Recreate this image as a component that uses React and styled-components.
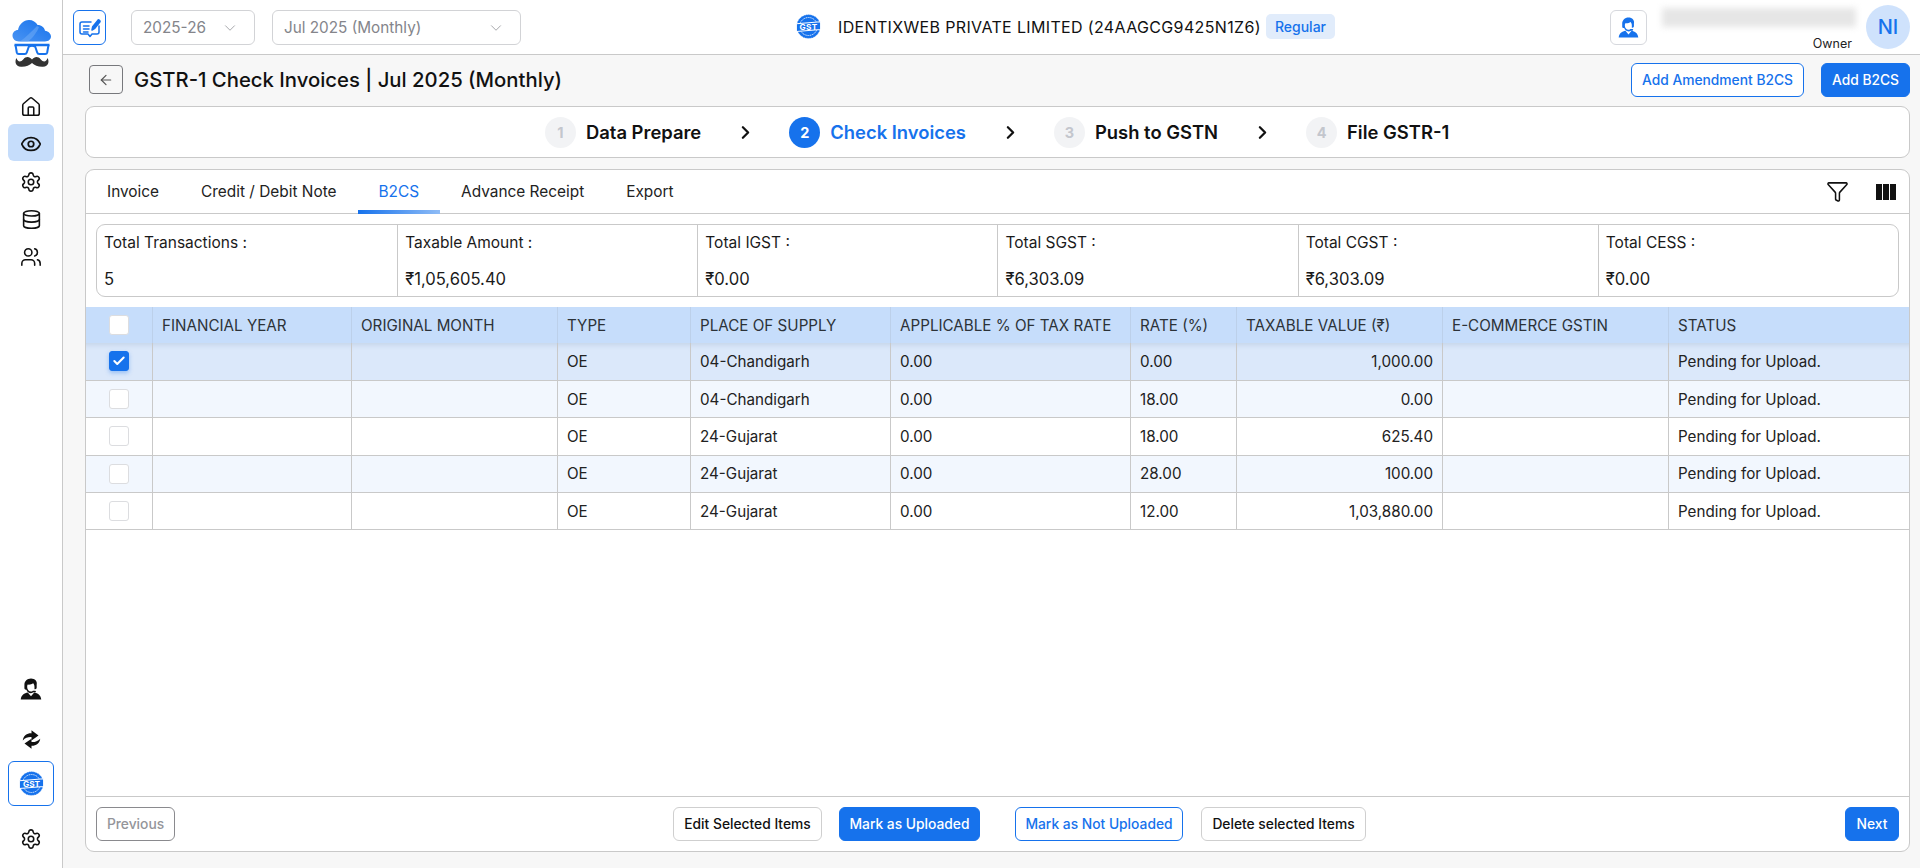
import React from "react";
import styled, { createGlobalStyle } from "styled-components";
import { ArrowLeft, ChevronDown, ChevronRight, Check, Database, Eye, Filter, Home, Settings, Users } from "lucide-react";

const primary = "#1672ec";
const line = "#c9c9c9";

const Global = createGlobalStyle`
  html, body { margin: 0; padding: 0; height: 100%; background: #f7f7f7; }
  body { font-family: Inter, "Noto Sans", sans-serif; color: #111; overflow: hidden; }
  * { box-sizing: border-box; }
`;

const Shell = styled.div`
  display: flex;
  width: 1920px;
  height: 868px;
`;
const Sidebar = styled.aside`
  width: 63px;
  flex: none;
  background: #fff;
  border-right: 1px solid ${line};
  display: flex;
  flex-direction: column;
  align-items: center;
  padding-top: 20px;
`;
const LogoBox = styled.div`
  width: 40px;
  height: 47px;
  margin-bottom: 19px;
  margin-left: 1px;
`;
const NavList = styled.nav`
  display: flex;
  flex-direction: column;
  align-self: stretch;
  padding: 0 8px;
`;
const NavItem = styled.div`
  height: 37.6px;
  padding-top: 4px;
  border-radius: 6px;
  display: flex;
  align-items: center;
  justify-content: center;
  background: ${(p) => (p.$active ? "#c6ddfb" : "transparent")};
  color: #111;
`;
const BottomNav = styled.div`
  margin-top: auto;
  align-self: stretch;
  display: flex;
  flex-direction: column;
  align-items: center;
  padding: 0 8px;
`;
const BottomItem = styled.div`
  height: ${(p) => p.$h}px;
  padding-top: ${(p) => p.$pt || 0}px;
  align-self: stretch;
  display: flex;
  align-items: center;
  justify-content: center;
  border: ${(p) => (p.$boxed ? `1px solid ${primary}` : "none")};
  border-radius: 6px;
  color: #111;
`;
const Main = styled.div`
  flex: 1;
  min-width: 0;
  display: flex;
  flex-direction: column;
`;
const Topbar = styled.header`
  height: 55px;
  flex: none;
  background: #fff;
  border-bottom: 1px solid ${line};
  display: flex;
  align-items: flex-start;
  justify-content: space-between;
  padding: 10px 10px 0;
`;
const TopLeft = styled.div`
  display: flex;
  align-items: center;
`;
const IconBtn = styled.div`
  width: ${(p) => p.$w}px;
  height: 35px;
  border: 1px solid ${(p) => p.$border};
  border-radius: 6px;
  display: flex;
  align-items: center;
  justify-content: center;
  color: ${primary};
  background: #fff;
`;
const Select = styled.div`
  width: ${(p) => p.$w}px;
  height: 35px;
  margin-left: ${(p) => p.$ml}px;
  border: 1px solid #d2d3d6;
  border-radius: 6px;
  display: flex;
  align-items: center;
  justify-content: space-between;
  padding: 0 15px 0 11px;
  color: #84858b;
  font-size: 15.3px;
`;
const Company = styled.div`
  display: flex;
  align-items: center;
  height: 35px;
  margin-top: -1px;
  font-size: 16px;
  letter-spacing: 0.35px;
  color: #111;
`;
const CompanyName = styled.span`
  margin: 0 5px 0 17px;
  white-space: nowrap;
`;
const Pill = styled.span`
  background: #e1ecfb;
  color: ${primary};
  font-size: 14px;
  font-weight: 500;
  letter-spacing: 0;
  border-radius: 5px;
  padding: 4px 9px;
  line-height: 17px;
`;
const TopRight = styled.div`
  display: flex;
  align-items: flex-start;
`;
const UserBlock = styled.div`
  width: 194px;
  margin: -2px 10px 0 15px;
  display: flex;
  flex-direction: column;
  align-items: flex-end;
`;
const BlurName = styled.div`
  width: 194px;
  height: 19px;
  background: #e6e6e6;
  filter: blur(3px);
`;
const Owner = styled.div`
  font-size: 12.5px;
  margin: 8px 4px 0 0;
  line-height: 18px;
  color: #222;
`;
const Avatar = styled.div`
  width: 44px;
  height: 44px;
  margin-top: -5px;
  border-radius: 50%;
  background: #cfe2fc;
  color: ${primary};
  font-size: 20px;
  font-weight: 500;
  display: flex;
  align-items: center;
  justify-content: center;
`;
const Body = styled.main`
  flex: 1;
  min-height: 0;
  display: flex;
  flex-direction: column;
  padding: 8px 10px 16px 22px;
`;
const PageHead = styled.div`
  height: 33px;
  flex: none;
  display: flex;
  align-items: center;
  justify-content: space-between;
  padding-left: 4px;
`;
const HeadLeft = styled.div`
  display: flex;
  align-items: center;
`;
const BackBtn = styled.button`
  width: 34px;
  height: 29px;
  padding: 0;
  border: 1px solid #77787c;
  border-radius: 4px;
  background: #f7f7f7;
  color: #555;
  display: flex;
  align-items: center;
  justify-content: center;
`;
const Title = styled.h1`
  margin: 0 0 0 11px;
  font-size: 20.3px;
  font-weight: 500;
  color: #111;
  white-space: nowrap;
`;
const HeadActions = styled.div`
  display: flex;
  gap: 17px;
`;
const Btn = styled.button`
  height: ${(p) => p.$h || 34}px;
  width: ${(p) => p.$w}px;
  padding: 0;
  font-family: inherit;
  font-size: 13.8px;
  font-weight: 500;
  border-radius: 6px;
  border: 1px solid ${(p) => (p.$kind === "solid" || p.$kind === "outline" ? primary : p.$kind === "muted" ? "#8a8a8e" : "#cfcfcf")};
  background: ${(p) => (p.$kind === "solid" ? primary : p.$kind === "muted" ? "transparent" : "#fff")};
  color: ${(p) => (p.$kind === "solid" ? "#fff" : p.$kind === "outline" ? primary : p.$kind === "muted" ? "#94959a" : "#111")};
`;
const StepCard = styled.section`
  height: 52px;
  flex: none;
  margin-top: 10px;
  background: #fff;
  border: 1px solid ${line};
  border-radius: 9px;
  display: flex;
  align-items: center;
  padding-left: 459px;
`;
const Step = styled.div`
  display: flex;
  align-items: center;
`;
const StepNum = styled.span`
  width: 31px;
  height: 31px;
  border-radius: 50%;
  font-size: 14.5px;
  font-weight: 700;
  display: flex;
  align-items: center;
  justify-content: center;
  background: ${(p) => (p.$active ? primary : "#f2f3f5")};
  color: ${(p) => (p.$active ? "#fff" : "#c3c6cd")};
`;
const StepLabel = styled.span`
  margin-left: 10px;
  font-size: 18.4px;
  font-weight: 600;
  color: ${(p) => (p.$active ? primary : "#111")};
  white-space: nowrap;
`;
const StepArrow = styled.span`
  display: flex;
  margin: 0 ${(p) => p.$right}px 0 34px;
  color: #111;
`;
const TableCard = styled.section`
  flex: 1;
  min-height: 0;
  margin-top: 11px;
  background: #fff;
  border: 1px solid ${line};
  border-radius: 9px;
  display: flex;
  flex-direction: column;
  overflow: hidden;
`;
const TabRow = styled.div`
  height: 44px;
  flex: none;
  border-bottom: 1px solid ${line};
  display: flex;
  align-items: stretch;
  justify-content: space-between;
  padding-right: 13px;
`;
const Tabs = styled.div`
  display: flex;
`;
const Tab = styled.div`
  padding: 0 21px;
  font-size: 15.4px;
  display: flex;
  align-items: center;
  position: relative;
  color: ${(p) => (p.$active ? primary : "#222")};
  &::after {
    content: "";
    display: ${(p) => (p.$active ? "block" : "none")};
    position: absolute;
    left: 0;
    right: 0;
    bottom: -1px;
    height: 4px;
    background: linear-gradient(90deg, ${primary}, #8fbcf6);
  }
`;
const Tools = styled.div`
  display: flex;
  align-items: center;
  gap: 27px;
`;
const Summary = styled.div`
  height: 73px;
  flex: none;
  margin: 10px 10px 0;
  border: 1px solid ${line};
  border-radius: 9px;
  display: grid;
  grid-template-columns: repeat(6, 1fr);
`;
const SumCell = styled.div`
  padding: 8px 8px 7px 7px;
  border-left: ${(p) => (p.$first ? "none" : `1px solid ${line}`)};
  display: flex;
  flex-direction: column;
  justify-content: space-between;
  color: #1a1a1a;
`;
const SumLabel = styled.span`
  font-size: 15.5px;
`;
const SumValue = styled.span`
  font-size: 16.6px;
`;
const TableWrap = styled.div`
  flex: 1;
  margin-top: 10px;
  min-height: 0;
`;
const Table = styled.table`
  width: 100%;
  table-layout: fixed;
  border-collapse: collapse;
  font-size: 15.2px;
`;
const Th = styled.th`
  height: 36px;
  padding: 0 9px;
  text-align: left;
  font-weight: 400;
  color: #2c3238;
  white-space: nowrap;
  background: #c6ddfb;
  border-left: 1px solid #bcd0ea;
  &:first-child { border-left: none; text-align: center; }
`;
const Tr = styled.tr`
  background: ${(p) => (p.$selected ? "#dbe8fa" : p.$alt ? "#f2f7fe" : "#fff")};
`;
const Td = styled.td`
  height: 37.4px;
  padding: 0 9px;
  color: #222;
  border-left: 1px solid ${line};
  border-bottom: 1px solid ${line};
  text-align: ${(p) => (p.$right ? "right" : "left")};
  white-space: nowrap;
  box-shadow: ${(p) => (p.$shade ? "inset 0 7px 6px -6px rgba(60,90,130,.18)" : "none")};
  &:first-child { border-left: none; }
`;
const Box = styled.span`
  width: 20px;
  height: 20px;
  border-radius: 3px;
  margin: 0 auto;
  display: flex;
  align-items: center;
  justify-content: center;
  background: ${(p) => (p.$on ? primary : "#fff")};
  border: 1px solid ${(p) => (p.$on ? primary : "#dcdde0")};
  box-shadow: ${(p) => (p.$on ? "0 2px 4px rgba(22,114,236,.35)" : "none")};
  color: #fff;
`;
const Footer = styled.div`
  height: 55px;
  flex: none;
  border-top: 1px solid ${line};
  display: flex;
  align-items: center;
  justify-content: space-between;
  padding: 0 10px;
`;
const FooterMid = styled.div`
  display: flex;
  margin-left: 19px;
`;
const Gap = styled.span`
  width: ${(p) => p.$w}px;
`;

const Logo = () => (
  <svg viewBox="0 0 40 47" width="40" height="47">
    <defs>
      <linearGradient id="cl" x1="0" y1="1" x2="1" y2="0">
        <stop offset="0" stopColor="#4a94f3" />
        <stop offset="1" stopColor="#1672ec" />
      </linearGradient>
    </defs>
    <path d="M7 21.500C3 21.500 .5 18.800 .5 15.600 .5 12.300 3 10 6 10 7 4.500 11.500 0 17 0c3.800 0 7 2 8.600 5 4 0 6.800 2.500 7.400 5.800 3.500.6 6 3 6 5.800 0 3-2.500 4.900-6 4.900Z" fill="url(#cl)" />
    <path d="M8 21.500C14 17 20 11 25 6l2 1C25 12 21 18 16 21.500Z" fill="#6fabf6" opacity=".55" />
    <g fill="none" stroke="#1672ec" strokeWidth="2">
      <path d="M2.500 25H37.500" strokeWidth="2.400" />
      <path d="M3.500 25l1.300 7.500c.2 1 1 1.500 2 1.500h6c1 0 1.700-.5 2-1.500L17 26" />
      <path d="M36.500 25l-1.300 7.500c-.2 1-1 1.500-2 1.500h-6c-1 0-1.700-.5-2-1.500L23 26" />
      <path d="M17 26.500c2-1 4-1 6 0" />
    </g>
    <path d="M20 39.500c-2.500-3-6-3.500-8.800 0-2.500 3-5.700 2.500-6.700-1.500-2 3.500-1.200 8.500 4.500 8.800 4.800.2 8.500-1.300 11-3.700 2.500 2.400 6.200 3.900 11 3.700 5.700-.3 6.500-5.300 4.500-8.800-1 4-4.200 4.500-6.700 1.500-2.800-3.500-6.300-3-8.800 0Z" fill="#333" />
  </svg>
);

const GstSeal = ({ size }) => (
  <svg viewBox="0 0 32 32" width={size} height={size}>
    <circle cx="16" cy="16" r="15.300" fill={primary} />
    <circle cx="16" cy="16" r="15.300" fill="none" stroke="#fff" strokeWidth=".9" strokeDasharray="1 1.400" />
    <circle cx="16" cy="16" r="11.500" fill="none" stroke="#fff" strokeWidth="1.100" strokeDasharray="1.600 .8" />
    <path d="M0.500 12.500 31.500 10V20L0.500 22.500Z" fill={primary} stroke="#fff" strokeWidth="1.300" />
    <text x="16" y="20.300" textAnchor="middle" fontFamily="Inter, sans-serif" fontWeight="700" fontSize="10.500" fill="#fff">GST</text>
  </svg>
);

const Agent = ({ size, color }) => (
  <svg viewBox="0 0 24 24" width={size} height={size} fill={color}>
    <path fillRule="evenodd" d="M12 .5C7.800.5 4.800 3.500 4.800 7.500v3.300c0 1 .7 1.900 1.700 1.900h.5c.8 2.200 2.700 3.800 5 3.800 1 0 2-.3 2.800-.9h1.700c.5 0 .9-.4.9-.9s-.4-.9-.9-.9h-2c-.3 0-.5.100-.7.300-.5.400-1.100.6-1.800.6-2.300 0-4.200-2.200-4.200-5 0-1 .2-1.800.6-2.500 2 .3 4.500-.2 6-1.400.8 1 1.400 2.200 1.400 3.900v2.500h.7c1 0 1.700-.9 1.700-1.900V7.500C19.200 3.500 16.200.5 12 .5Z" />
    <path d="M8.500 15.800C4.800 16.700 1.300 18.300.8 23.500h22.400c-.5-5.200-4-6.800-7.700-7.700L12 20Z" />
  </svg>
);

const SyncIcon = () => (
  <svg viewBox="0 0 24 24" width="21" height="21" fill="#111">
    <path d="M2 13C2.800 7.500 7 4.800 12 5V1.500L20 7.500 12 13V9.200C8 9 5 10 2 13Z" />
    <path d="M22 11C21.200 16.500 17 19.200 12 19V22.500L4 16.500 12 11V14.800C16 15 19 14 22 11Z" />
  </svg>
);

const NoteIcon = () => (
  <svg viewBox="0 0 24 24" width="24" height="24" fill="none" stroke={primary} strokeWidth="1.500" strokeLinecap="round" strokeLinejoin="round">
    <path d="M13 6H4a2 2 0 0 0-2 2v8a2 2 0 0 0 2 2h6l2 2.500 2-2.500h5a2 2 0 0 0 2-2v-6" />
    <path d="M5.500 10H11M5.500 13H11M5.500 16H10" />
    <path d="M14 14l.7-3.300 5.300-6.600c.6-.7 2.600.8 2 1.600l-5.200 6.600Z" fill={primary} />
  </svg>
);

const ColumnsIcon = () => (
  <svg viewBox="0 0 20 16" width="20" height="16" fill="#111">
    <rect x="0" y="0" width="6" height="16" />
    <rect x="7" y="0" width="6" height="16" />
    <rect x="14" y="0" width="6" height="16" />
  </svg>
);

const widths = [66.5, 199, 206, 133, 200, 240, 106, 206, 226, 240.500];
const headers = ["FINANCIAL YEAR", "ORIGINAL MONTH", "TYPE", "PLACE OF SUPPLY", "APPLICABLE % OF TAX RATE", "RATE (%)", "TAXABLE VALUE (₹)", "E-COMMERCE GSTIN", "STATUS"];
const rows = [
  { place: "04-Chandigarh", rate: "0.00", value: "1,000.00", selected: true },
  { place: "04-Chandigarh", rate: "18.00", value: "0.00", alt: true },
  { place: "24-Gujarat", rate: "18.00", value: "625.40" },
  { place: "24-Gujarat", rate: "28.00", value: "100.00", alt: true },
  { place: "24-Gujarat", rate: "12.00", value: "1,03,880.00" },
];
const summary = [
  ["Total Transactions :", "5"],
  ["Taxable Amount :", "₹1,05,605.40"],
  ["Total IGST :", "₹0.00"],
  ["Total SGST :", "₹6,303.09"],
  ["Total CGST :", "₹6,303.09"],
  ["Total CESS :", "₹0.00"],
];
const steps = [
  { n: 1, label: "Data Prepare", right: 33 },
  { n: 2, label: "Check Invoices", active: true, right: 33 },
  { n: 3, label: "Push to GSTN", right: 33 },
  { n: 4, label: "File GSTR-1" },
];
const tabs = ["Invoice", "Credit / Debit Note", "B2CS", "Advance Receipt", "Export"];

export default function App() {
  return (
    <Shell>
      <Global />
      <Sidebar>
        <LogoBox><Logo /></LogoBox>
        <NavList>
          <NavItem><Home size={22} strokeWidth={1.7} /></NavItem>
          <NavItem $active><Eye size={22} strokeWidth={1.9} /></NavItem>
          <NavItem><Settings size={22} strokeWidth={1.7} /></NavItem>
          <NavItem><Database size={21} strokeWidth={1.8} /></NavItem>
          <NavItem><Users size={22} strokeWidth={1.7} /></NavItem>
        </NavList>
        <BottomNav>
          <BottomItem $h={48}><Agent size={22} color="#111" /></BottomItem>
          <BottomItem $h={48} $pt={4}><SyncIcon /></BottomItem>
          <BottomItem $h={45} $boxed><GstSeal size={25} /></BottomItem>
          <BottomItem $h={62} $pt={3}><Settings size={22} strokeWidth={1.7} /></BottomItem>
        </BottomNav>
      </Sidebar>
      <Main>
        <Topbar>
          <TopLeft>
            <IconBtn $w={33} $border={primary}><NoteIcon /></IconBtn>
            <Select $w={124} $ml={25}>2025-26<ChevronDown size={18} strokeWidth={1} color="#8a8b90" /></Select>
            <Select $w={249} $ml={17}>Jul 2025 (Monthly)<ChevronDown size={18} strokeWidth={1} color="#8a8b90" /></Select>
          </TopLeft>
          <Company>
            <GstSeal size={25} />
            <CompanyName>IDENTIXWEB PRIVATE LIMITED (24AAGCG9425N1Z6)</CompanyName>
            <Pill>Regular</Pill>
          </Company>
          <TopRight>
            <IconBtn $w={37} $border="#d6d8dd"><Agent size={21} color={primary} /></IconBtn>
            <UserBlock>
              <BlurName />
              <Owner>Owner</Owner>
            </UserBlock>
            <Avatar>NI</Avatar>
          </TopRight>
        </Topbar>
        <Body>
          <PageHead>
            <HeadLeft>
              <BackBtn><ArrowLeft size={16} strokeWidth={1.8} /></BackBtn>
              <Title>GSTR-1 Check Invoices | Jul 2025 (Monthly)</Title>
            </HeadLeft>
            <HeadActions>
              <Btn $kind="outline" $w={173}>Add Amendment B2CS</Btn>
              <Btn $kind="solid" $w={89}>Add B2CS</Btn>
            </HeadActions>
          </PageHead>
          <StepCard>
            {steps.map((s) => (
              <React.Fragment key={s.n}>
                <Step>
                  <StepNum $active={s.active}>{s.n}</StepNum>
                  <StepLabel $active={s.active}>{s.label}</StepLabel>
                </Step>
                {s.right && (
                  <StepArrow $right={s.right}><ChevronRight size={21} strokeWidth={2.6} /></StepArrow>
                )}
              </React.Fragment>
            ))}
          </StepCard>
          <TableCard>
            <TabRow>
              <Tabs>
                {tabs.map((t) => <Tab key={t} $active={t === "B2CS"}>{t}</Tab>)}
              </Tabs>
              <Tools>
                <Filter size={23} strokeWidth={1.6} color="#111" />
                <ColumnsIcon />
              </Tools>
            </TabRow>
            <Summary>
              {summary.map(([k, v], i) => (
                <SumCell key={k} $first={i === 0}>
                  <SumLabel>{k}</SumLabel>
                  <SumValue>{v}</SumValue>
                </SumCell>
              ))}
            </Summary>
            <TableWrap>
              <Table>
                <colgroup>
                  {widths.map((w, i) => <col key={i} style={{ width: w }} />)}
                </colgroup>
                <thead>
                  <tr>
                    <Th><Box /></Th>
                    {headers.map((h) => <Th key={h}>{h}</Th>)}
                  </tr>
                </thead>
                <tbody>
                  {rows.map((r, i) => (
                    <Tr key={i} $selected={r.selected} $alt={r.alt}>
                      <Td $shade={r.selected}><Box $on={r.selected}>{r.selected && <Check size={14} strokeWidth={3.5} />}</Box></Td>
                      <Td $shade={r.selected} />
                      <Td $shade={r.selected} />
                      <Td $shade={r.selected}>OE</Td>
                      <Td $shade={r.selected}>{r.place}</Td>
                      <Td $shade={r.selected}>0.00</Td>
                      <Td $shade={r.selected}>{r.rate}</Td>
                      <Td $shade={r.selected} $right>{r.value}</Td>
                      <Td $shade={r.selected} />
                      <Td $shade={r.selected}>Pending for Upload.</Td>
                    </Tr>
                  ))}
                </tbody>
              </Table>
            </TableWrap>
            <Footer>
              <Btn $kind="muted" $w={79}>Previous</Btn>
              <FooterMid>
                <Btn $w={149}>Edit Selected Items</Btn>
                <Gap $w={17} />
                <Btn $kind="solid" $w={141}>Mark as Uploaded</Btn>
                <Gap $w={35} />
                <Btn $kind="outline" $w={168}>Mark as Not Uploaded</Btn>
                <Gap $w={18} />
                <Btn $w={165}>Delete selected Items</Btn>
              </FooterMid>
              <Btn $kind="solid" $w={54}>Next</Btn>
            </Footer>
          </TableCard>
        </Body>
      </Main>
    </Shell>
  );
}
